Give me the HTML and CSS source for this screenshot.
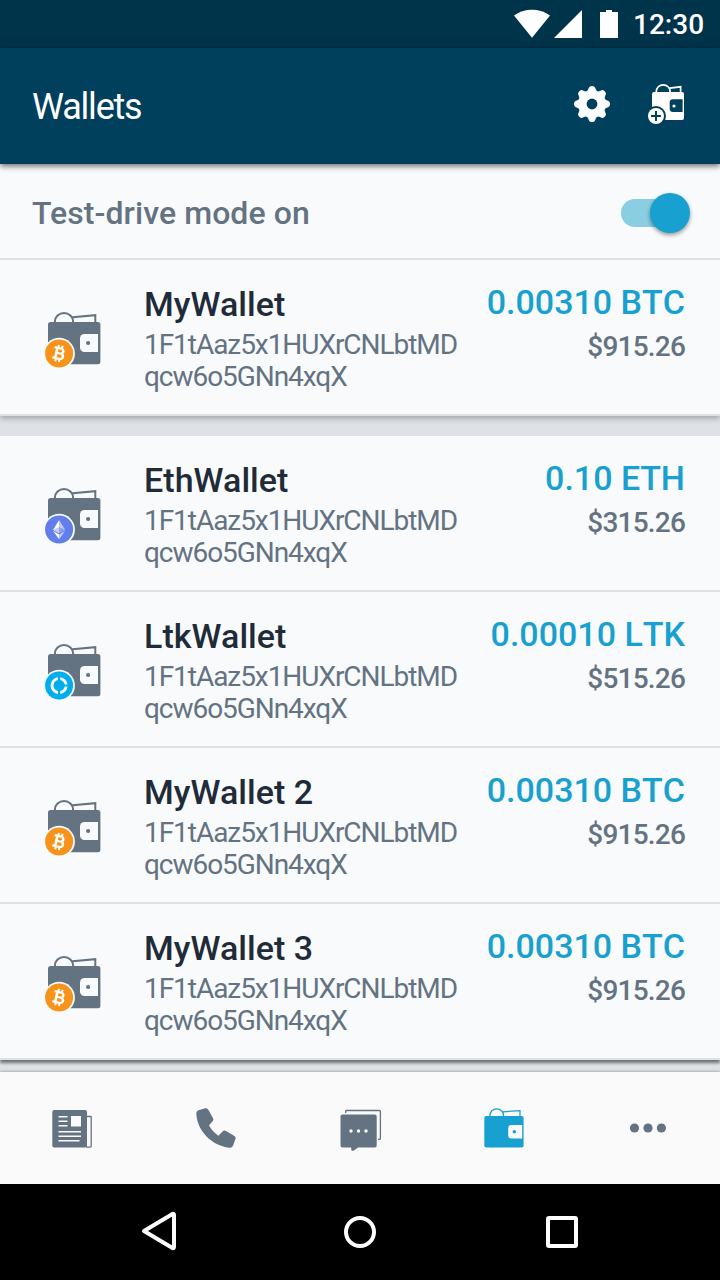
FILE: index.html
```html
<!DOCTYPE html>
<html lang="en">
<head>
<meta charset="utf-8">
<title>Wallets</title>
<link rel="stylesheet" href="styles.css">
</head>
<body>
<svg class="defs" width="0" height="0" aria-hidden="true">
  <symbol id="wallet" viewBox="44 308 60 64">
    <path d="M54.9 323v-1.5a9.1 8.6 0 0 1 18.2 0v1.5M72.5 317.3L95.3 315.2V323" fill="none" stroke="#647382" stroke-width="2"/>
    <rect x="48" y="322" width="52.400" height="42.200" rx="2.500" fill="#647382"/>
    <path d="M98 334H84.500a4.500 4.500 0 0 0-4.500 4.500v9a4.500 4.500 0 0 0 4.500 4.500H98z" fill="#f9fafc"/>
    <circle cx="88.100" cy="343" r="2.100" fill="#647382"/>
    <circle cx="59.200" cy="353.500" r="15.700" fill="#f9fafc"/>
  </symbol>
  <symbol id="btc" viewBox="44 308 60 64">
    <circle cx="59.100" cy="353.500" r="14" fill="#f7931a"/>
    <g transform="translate(59.100 353.500) rotate(13) scale(1.150 1)" fill="none" stroke="#fff" stroke-width="2.200">
      <path d="M-5 -5.200H.7a2.500 2.500 0 0 1 0 5H-2.200M.7-.2H1.200a2.700 2.700 0 0 1 0 5.400H-5M-2.500-5.200V5.200"/>
      <path d="M-1.800-8.400v3M1.500-8.400v3M-1.800 5.200v3.200M1.500 5.200v3.200" stroke-width="1.700"/>
    </g>
  </symbol>
  <symbol id="eth" viewBox="44 308 60 64">
    <circle cx="59.100" cy="353.500" r="14" fill="#627eea"/>
    <path d="M59.100 344l-6 9.700 6 3.500z" fill="#fff"/>
    <path d="M59.100 344l6 9.700-6 3.500z" fill="#c3cef8"/>
    <path d="M53.100 353.700l6-2.700v6.200z" fill="#c3cef8"/>
    <path d="M65.100 353.700l-6-2.700v6.200z" fill="#8b9ff0"/>
    <path d="M53.100 355l6 3.500v4.800z" fill="#fff"/>
    <path d="M65.100 355l-6 3.500v4.800z" fill="#c3cef8"/>
  </symbol>
  <symbol id="ltk" viewBox="44 308 60 64">
    <circle cx="59.100" cy="353.500" r="14" fill="#00aeef"/>
    <circle cx="59.100" cy="353.500" r="7.100" fill="none" stroke="#fff" stroke-width="2.900"/>
    <path d="M59.100 343.500v5M59.100 358.500v5M64 353.500h5" stroke="#00aeef" stroke-width="2.200"/>
  </symbol>
</svg>

<div class="screen">
  <div class="status-bar">
    <svg class="status-icons" width="110" height="32" viewBox="512 8 110 32" fill="#fff">
      <path d="M514 15.500Q522 9.800 532 9.800T550 15.500L532 37.800z"/>
      <path d="M582 10v28h-28z"/>
      <path d="M600 12h6v-2h6v2h6v26h-18z"/>
    </svg>
    <span class="clock">12:30</span>
  </div>

  <header class="app-bar">
    <h1 class="title">Wallets</h1>
    <svg class="gear" width="40" height="40" viewBox="-20 -20 40 40" fill="#fff">
      <defs><path id="tooth" d="M-6.500-11.500Q-3.700-13.500-3-16.500Q-2.600-18 0-18T3-16.500Q3.700-13.500 6.500-11.500V0h-13z"/></defs>
      <path d="M0-13.300A13.300 13.300 0 1 1 0 13.300A13.300 13.300 0 1 1 0-13.300z"/>
      <use href="#tooth"/><use href="#tooth" transform="rotate(45)"/><use href="#tooth" transform="rotate(90)"/><use href="#tooth" transform="rotate(135)"/>
      <use href="#tooth" transform="rotate(180)"/><use href="#tooth" transform="rotate(225)"/><use href="#tooth" transform="rotate(270)"/><use href="#tooth" transform="rotate(315)"/>
      <circle r="5.400" fill="#00405d"/>
    </svg>
    <svg class="add-wallet" width="40" height="44" viewBox="646 82 40 44">
      <path d="M656.300 93v-1.500a6.900 6.700 0 0 1 13.800 0V93M669.500 88.200L680.600 86.800V93" fill="none" stroke="#fff" stroke-width="1.700"/>
      <rect x="652" y="92" width="32" height="28" rx="2" fill="#fff"/>
      <path d="M682.600 99.300H673a3.300 3.300 0 0 0-3.300 3.300v6.200a3.300 3.300 0 0 0 3.300 3.300h9.600z" fill="#00405d"/>
      <circle cx="674" cy="106" r="1.600" fill="#fff"/>
      <circle cx="656" cy="116" r="10" fill="#00405d"/>
      <circle cx="656" cy="116" r="8" fill="#fff"/>
      <path d="M651 116h10M656 111v10" stroke="#00405d" stroke-width="2"/>
    </svg>
  </header>

  <main class="content">
    <section class="card">
      <div class="mode-row">
        <span class="mode-label">Test-drive mode on</span>
        <div class="switch"><div class="track"></div><div class="thumb"></div></div>
      </div>
      <article class="wallet">
        <svg class="wallet-icon"><use href="#wallet"/><use href="#btc"/></svg>
        <div class="info"><h2 class="name">MyWallet</h2><p class="address">1F1tAaz5x1HUXrCNLbtMD<br>qcw6o5GNn4xqX</p></div>
        <div class="balance"><div class="amount">0.00310 BTC</div><div class="fiat">$915.26</div></div>
      </article>
    </section>
    <section class="card list">
      <article class="wallet">
        <svg class="wallet-icon"><use href="#wallet"/><use href="#eth"/></svg>
        <div class="info"><h2 class="name">EthWallet</h2><p class="address">1F1tAaz5x1HUXrCNLbtMD<br>qcw6o5GNn4xqX</p></div>
        <div class="balance"><div class="amount">0.10 ETH</div><div class="fiat">$315.26</div></div>
      </article>
      <article class="wallet">
        <svg class="wallet-icon"><use href="#wallet"/><use href="#ltk"/></svg>
        <div class="info"><h2 class="name">LtkWallet</h2><p class="address">1F1tAaz5x1HUXrCNLbtMD<br>qcw6o5GNn4xqX</p></div>
        <div class="balance"><div class="amount">0.00010 LTK</div><div class="fiat">$515.26</div></div>
      </article>
      <article class="wallet">
        <svg class="wallet-icon"><use href="#wallet"/><use href="#btc"/></svg>
        <div class="info"><h2 class="name">MyWallet 2</h2><p class="address">1F1tAaz5x1HUXrCNLbtMD<br>qcw6o5GNn4xqX</p></div>
        <div class="balance"><div class="amount">0.00310 BTC</div><div class="fiat">$915.26</div></div>
      </article>
      <article class="wallet">
        <svg class="wallet-icon"><use href="#wallet"/><use href="#btc"/></svg>
        <div class="info"><h2 class="name">MyWallet 3</h2><p class="address">1F1tAaz5x1HUXrCNLbtMD<br>qcw6o5GNn4xqX</p></div>
        <div class="balance"><div class="amount">0.00310 BTC</div><div class="fiat">$915.26</div></div>
      </article>
    </section>
  </main>

  <nav class="tabs">
    <a class="tab"><svg width="48" height="48" viewBox="48 1104 48 48">
      <path d="M86 1116.500h4.500a.7.700 0 0 1 .7.700v29.100a.8.800 0 0 1-.8.800H86" fill="none" stroke="#647382" stroke-width="1.300"/>
      <rect x="52.300" y="1110" width="34.700" height="37.600" rx="2" fill="#647382"/>
      <rect x="71" y="1116" width="10" height="10.500" fill="#fafafa"/>
      <path d="M58.500 1116.800h9M58.500 1121.300h9M58.500 1125.800h9M58.500 1131.800h22.500M58.500 1136.300h22.500M58.500 1140.800h21" stroke="#fafafa" stroke-width="1.500"/>
    </svg></a>
    <a class="tab"><svg width="48" height="48" viewBox="192 1104 48 48">
      <path transform="translate(30 1050) scale(.33333)" d="M499 192Q498 184 506 181L525 175Q532 173 535 179L549 205Q552 210 548 214L537 226Q546 244 565 257L577 245Q582 240 588 243L612 257Q619 261 616 268L609 287Q606 294 598 293C545 287 502 243 499 192z" fill="#647382"/>
    </svg></a>
    <a class="tab"><svg width="48" height="48" viewBox="336 1104 48 48">
      <path d="M345.700 1113v-1.700a.8.800 0 0 1 .8-.8h33a.9.900 0 0 1 .9.900v27a.9.900 0 0 1-.9.900H378" fill="none" stroke="#647382" stroke-width="1.300"/>
      <path d="M342.500 1114.500h32.200a2 2 0 0 1 2 2v29a2 2 0 0 1-2 2H358l-4.500 3.200q-2.300.6-2.300-1.200v-2h-8.700a2 2 0 0 1-2-2v-29a2 2 0 0 1 2-2z" fill="#647382"/>
      <g fill="#fafafa"><circle cx="351" cy="1131" r="1.700"/><circle cx="358.500" cy="1131" r="1.700"/><circle cx="366" cy="1131" r="1.700"/></g>
    </svg></a>
    <a class="tab"><svg width="48" height="48" viewBox="480 1104 48 48">
      <path d="M489.900 1117v-1.500a6.800 6.600 0 0 1 13.600 0v1.500M502.500 1111.800L520 1110.700V1117" fill="none" stroke="#17a0d0" stroke-width="1.300"/>
      <rect x="484.300" y="1116" width="39.300" height="31.600" rx="2" fill="#17a0d0"/>
      <path d="M522.200 1125H511.500a3.300 3.300 0 0 0-3.300 3.300v7a3.300 3.300 0 0 0 3.300 3.300h10.700z" fill="#fafafa"/>
      <circle cx="514.300" cy="1131.700" r="1.700" fill="#17a0d0"/>
    </svg></a>
    <a class="tab"><svg width="48" height="48" viewBox="624 1104 48 48" fill="#647382">
      <circle cx="634.500" cy="1128" r="4.600"/><circle cx="648" cy="1128" r="4.600"/><circle cx="661.400" cy="1128" r="4.600"/>
    </svg></a>
  </nav>

  <div class="system-bar">
    <svg width="440" height="48" viewBox="140 1208 440 48" fill="none" stroke="#fff" stroke-width="4" stroke-linejoin="round">
      <path d="M144 1231L172.500 1214Q174 1213.500 174 1215V1247Q174 1248.500 172.500 1248z"/>
      <circle cx="360" cy="1232" r="14"/>
      <rect x="548" y="1218" width="28" height="28" rx="1"/>
    </svg>
  </div>
</div>
</body>
</html>
```

FILE: styles.css
```css
* {
  box-sizing: border-box;
  margin: 0;
  padding: 0;
}

body {
  font-family: Roboto, "Liberation Sans", sans-serif;
  background: #dee1e6;
}

svg {
  display: block;
}

.defs {
  position: absolute;
}

.screen {
  width: 720px;
  height: 1280px;
  display: flex;
  flex-direction: column;
  overflow: hidden;
}

.status-bar {
  height: 48px;
  flex: none;
  display: flex;
  align-items: center;
  justify-content: flex-end;
  padding-right: 16px;
  background: #00344b;
}

.clock {
  width: 71px;
  margin-left: 11px;
  padding-top: 2px;
  color: #fff;
  font-size: 28px;
  font-weight: 500;
  line-height: 48px;
  white-space: nowrap;
}

.app-bar {
  height: 116px;
  flex: none;
  display: flex;
  align-items: center;
  padding: 0 34px 0 32px;
  background: #00405d;
  box-shadow: 0 2px 6px rgba(0, 0, 0, 0.6);
  z-index: 2;
}

.title {
  flex: 1;
  padding-top: 2px;
  color: #fff;
  font-size: 36px;
  font-weight: 400;
  letter-spacing: -1.2px;
}

.gear {
  margin: -4px 34px 0 0;
}

.add-wallet {
  margin-top: -4px;
}

.content {
  height: 908px;
  flex: none;
}

.card {
  background: #f9fafc;
  box-shadow: 0 2px 6px rgba(0, 0, 0, 0.3);
}

.list {
  margin-top: 20px;
  box-shadow: 0 3px 3px rgba(0, 0, 0, 0.5);
}

.mode-row {
  height: 96px;
  display: flex;
  align-items: center;
  justify-content: space-between;
  padding: 3px 30px 0 32px;
  border-bottom: 2px solid #dee1e6;
}

.mode-label {
  padding-top: 1px;
  color: #647382;
  font-size: 32px;
  font-weight: 500;
  letter-spacing: 0.07px;
}

.switch {
  display: grid;
  grid-template-columns: 29px 40px;
  align-items: center;
}

.track {
  width: 50px;
  height: 28px;
  border-radius: 14px;
  background: #89cee1;
}

.thumb {
  width: 40px;
  height: 40px;
  border-radius: 50%;
  background: #17a0d0;
  box-shadow: 0 2px 4px rgba(0, 0, 0, 0.4);
}

.wallet {
  height: 156px;
  display: flex;
  align-items: flex-start;
  padding: 22px 35px 0 44px;
  border-bottom: 2px solid #dee1e6;
}

.wallet-icon {
  width: 60px;
  height: 64px;
  flex: none;
  margin: 26px 40px 0 0;
}

.info {
  flex: 1;
  padding-top: 2px;
}

.name {
  color: #1f2b38;
  font-size: 34px;
  font-weight: 500;
  line-height: 40px;
  letter-spacing: 0.05px;
}

.address {
  margin-top: 5px;
  color: #647382;
  font-size: 28px;
  letter-spacing: -1.05px;
  line-height: 32px;
}

.balance {
  text-align: right;
  white-space: nowrap;
}

.amount {
  color: #17a0d0;
  font-size: 34px;
  font-weight: 500;
  font-kerning: none;
  line-height: 40px;
}

.fiat {
  margin-top: 9px;
  color: #647382;
  font-size: 28px;
  font-weight: 500;
  letter-spacing: -0.8px;
  line-height: 32px;
}

.tabs {
  height: 112px;
  flex: none;
  display: grid;
  grid-template-columns: repeat(5, 1fr);
  align-items: center;
  justify-items: center;
  background: #fafafa;
  box-shadow: 0 0 3px rgba(0, 0, 0, 0.4);
  z-index: 2;
}

.system-bar {
  height: 96px;
  flex: none;
  padding: 24px 140px;
  background: #000;
  z-index: 3;
}
```
